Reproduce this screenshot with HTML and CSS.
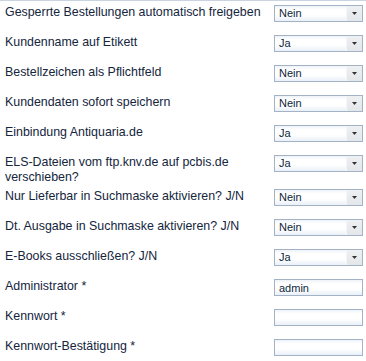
FILE: index.html
```html
<!DOCTYPE html>
<html lang="de">
<head>
<meta charset="utf-8">
<title>Einstellungen</title>
<link rel="stylesheet" href="styles.css">
</head>
<body>
<div class="form">
  <div class="label">Gesperrte Bestellungen automatisch freigeben</div>
  <div class="field"><div class="combo"><span class="value">Nein</span><span class="trigger"><svg width="5" height="3" viewBox="0 0 5 3"><path d="M0 0h5L2.5 3z" fill="#333"/></svg></span></div></div>

  <div class="label">Kundenname auf Etikett</div>
  <div class="field"><div class="combo"><span class="value">Ja</span><span class="trigger"><svg width="5" height="3" viewBox="0 0 5 3"><path d="M0 0h5L2.5 3z" fill="#333"/></svg></span></div></div>

  <div class="label">Bestellzeichen als Pflichtfeld</div>
  <div class="field"><div class="combo"><span class="value">Nein</span><span class="trigger"><svg width="5" height="3" viewBox="0 0 5 3"><path d="M0 0h5L2.5 3z" fill="#333"/></svg></span></div></div>

  <div class="label">Kundendaten sofort speichern</div>
  <div class="field"><div class="combo"><span class="value">Nein</span><span class="trigger"><svg width="5" height="3" viewBox="0 0 5 3"><path d="M0 0h5L2.5 3z" fill="#333"/></svg></span></div></div>

  <div class="label">Einbindung Antiquaria.de</div>
  <div class="field"><div class="combo"><span class="value">Ja</span><span class="trigger"><svg width="5" height="3" viewBox="0 0 5 3"><path d="M0 0h5L2.5 3z" fill="#333"/></svg></span></div></div>

  <div class="label">ELS-Dateien vom ftp.knv.de auf pcbis.de verschieben?</div>
  <div class="field"><div class="combo"><span class="value">Ja</span><span class="trigger"><svg width="5" height="3" viewBox="0 0 5 3"><path d="M0 0h5L2.5 3z" fill="#333"/></svg></span></div></div>

  <div class="label">Nur Lieferbar in Suchmaske aktivieren? J/N</div>
  <div class="field"><div class="combo"><span class="value">Nein</span><span class="trigger"><svg width="5" height="3" viewBox="0 0 5 3"><path d="M0 0h5L2.5 3z" fill="#333"/></svg></span></div></div>

  <div class="label">Dt. Ausgabe in Suchmaske aktivieren? J/N</div>
  <div class="field"><div class="combo"><span class="value">Nein</span><span class="trigger"><svg width="5" height="3" viewBox="0 0 5 3"><path d="M0 0h5L2.5 3z" fill="#333"/></svg></span></div></div>

  <div class="label">E-Books ausschließen? J/N</div>
  <div class="field"><div class="combo"><span class="value">Ja</span><span class="trigger"><svg width="5" height="3" viewBox="0 0 5 3"><path d="M0 0h5L2.5 3z" fill="#333"/></svg></span></div></div>

  <div class="label">Administrator *</div>
  <div class="field"><input class="text" type="text" value="admin"></div>

  <div class="label">Kennwort *</div>
  <div class="field"><input class="text" type="password" value=""></div>

  <div class="label">Kennwort-Bestätigung *</div>
  <div class="field"><input class="text" type="password" value=""></div>
</div>
</body>
</html>
```
FILE: styles.css
```css
html, body {
  margin: 0;
  padding: 0;
  background: #ffffff;
}

body {
  font-family: "Liberation Sans", Arial, sans-serif;
  color: #14253d;
}

.form {
  display: grid;
  grid-template-columns: 269px 89px;
  row-gap: 4px;
  padding: 4px 0 0 5px;
  border-top: 1px solid #c9d4e0;
}

.label {
  font-size: 12.4px;
  line-height: 15px;
  padding-right: 8px;
}

.field {
  height: 26px;
}

.combo {
  display: flex;
  box-sizing: border-box;
  width: 89px;
  height: 17px;
  border: 1px solid #a3b3c5;
  background: linear-gradient(to bottom, #eef3f9 0%, #ffffff 25%, #ffffff 60%, #e9f0f8 100%);
}

.value {
  flex: 1;
  font-size: 11px;
  line-height: 15px;
  padding-left: 4px;
  color: #0d1f3c;
}

.trigger {
  width: 15px;
  display: flex;
  align-items: center;
  justify-content: center;
  border-left: 1px solid #f4f6f8;
  background: linear-gradient(to bottom, #eef0f2 0%, #e4e7ea 100%);
}

.text {
  display: block;
  box-sizing: border-box;
  width: 89px;
  height: 17px;
  margin: 0;
  padding: 0 0 0 4px;
  border: 1px solid #a3b3c5;
  background: linear-gradient(to bottom, #eef3f9 0%, #ffffff 25%, #ffffff 60%, #e9f0f8 100%);
  font-family: "Liberation Sans", Arial, sans-serif;
  font-size: 11px;
  color: #0d1f3c;
  outline: none;
}
```
